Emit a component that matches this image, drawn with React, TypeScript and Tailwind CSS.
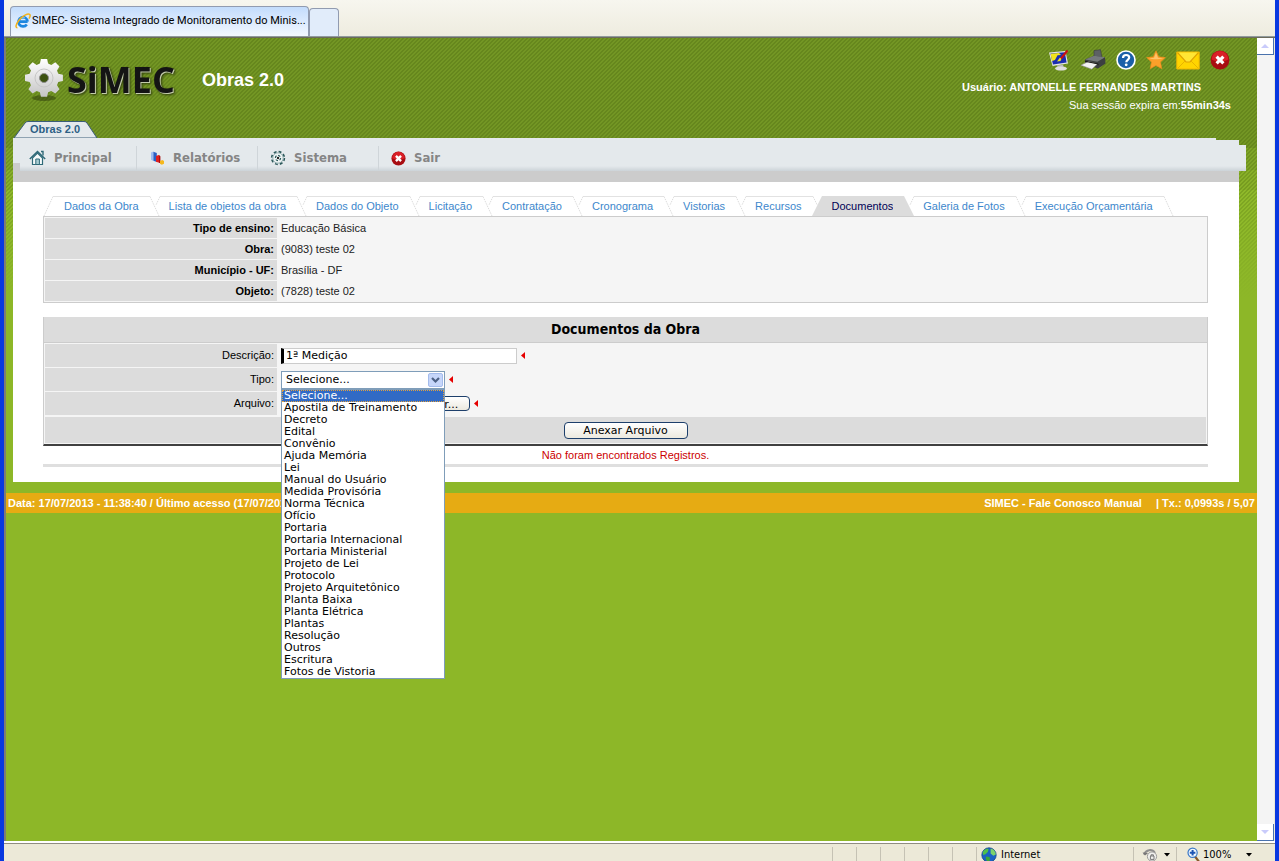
/**
 * SIMEC — Obras 2.0, "Documentos" screen inside its browser window.
 */
import type { ReactNode } from 'react';

const MENU = [
  { label: 'Principal', icon: <HomeIcon /> },
  { label: 'Relatórios', icon: <ChartIcon /> },
  { label: 'Sistema', icon: <GearIcon /> },
  { label: 'Sair', icon: <CloseIcon size={15} /> },
];

const TABS = [
  'Dados da Obra',
  'Lista de objetos da obra',
  'Dados do Objeto',
  'Licitação',
  'Contratação',
  'Cronograma',
  'Vistorias',
  'Recursos',
  'Documentos',
  'Galeria de Fotos',
  'Execução Orçamentária',
];

const ACTIVE_TAB = 'Documentos';

const INFO = [
  ['Tipo de ensino:', 'Educação Básica'],
  ['Obra:', '(9083) teste 02'],
  ['Município - UF:', 'Brasília - DF'],
  ['Objeto:', '(7828) teste 02'],
];

const TIPOS = [
  'Selecione...',
  'Apostila de Treinamento',
  'Decreto',
  'Edital',
  'Convênio',
  'Ajuda Memória',
  'Lei',
  'Manual do Usuário',
  'Medida Provisória',
  'Norma Técnica',
  'Ofício',
  'Portaria',
  'Portaria Internacional',
  'Portaria Ministerial',
  'Projeto de Lei',
  'Protocolo',
  'Projeto Arquitetônico',
  'Planta Baixa',
  'Planta Elétrica',
  'Plantas',
  'Resolução',
  'Outros',
  'Escritura',
  'Fotos de Vistoria',
];

// ─── Icons ───────────────────────────────────────────────────────────────────

function IeIcon() {
  return (
    <svg width="16" height="16" viewBox="0 0 16 16" fill="none" className="shrink-0">
      <path d="M12.6 8.6H4.2M12.6 8.6A4.6 4.6 0 1 0 11.8 11.4" stroke="#1c86e0" strokeWidth="2.6" />
      <path d="M4.6 6.4A3.8 3.8 0 0 1 10 5" stroke="#7cc8fa" strokeWidth="1" />
      <path d="M2.4 14.6C.2 15 .6 11.4 4 7.2 7.6 2.8 13 .2 14.6 1.4c1 .8.4 2.6-.6 4.2" stroke="#f2b21c" strokeWidth="1.5" />
    </svg>
  );
}

function HomeIcon() {
  return (
    <svg width="17" height="16" viewBox="0 0 17 16" fill="none" className="shrink-0">
      <path d="M12 1.5h2v4" stroke="#2f6a78" strokeWidth="1.4" />
      <path d="M3.5 8v6.5h10V8L8.5 3z" fill="#f7fbfb" stroke="#2f6a78" strokeWidth="1.2" />
      <path d="M.8 9 8.5 1.6 16.2 9" stroke="#2f6a78" strokeWidth="1.5" />
      <path d="M6.8 14.5V9h3.6v5.5z" fill="#a9cdd2" stroke="#2f6a78" />
    </svg>
  );
}

function ChartIcon() {
  return (
    <svg width="16" height="16" viewBox="0 0 16 16" className="shrink-0">
      <path d="M2 2.6 4.4 1.5v9.5L2 9.8z" fill="#9dbcf2" />
      <path d="M4.4 1.8 7.8 3v9L4.4 10.800z" fill="#2a5fc4" />
      <path d="M7 6l2.600-1 1.400.8v7.200L7 11.800z" fill="#e01f1f" />
      <path d="M10 5.400l1.400.8v7l-1.400-.4z" fill="#a90f0f" />
      <path d="M11 11l2.400-1 1.600.9v2.800l-2.200 1-1.800-.9z" fill="#f5b81e" />
    </svg>
  );
}

function GearIcon() {
  return (
    <svg width="16" height="16" viewBox="0 0 16 16" fill="none" className="shrink-0">
      <circle cx="8" cy="8" r="6.4" stroke="#2d5a5c" strokeWidth="1.6" strokeDasharray="2.9 2.1" />
      <circle cx="8" cy="8" r="5.2" fill="#eef4f4" stroke="#7fa0a2" strokeWidth=".8" />
      <circle cx="8" cy="8" r="2.6" stroke="#2d5a5c" strokeWidth="1.2" strokeDasharray="2.4 1.6" />
      <circle cx="8" cy="8" r="1.2" fill="#222" />
    </svg>
  );
}

function CloseIcon({ size }: { size: number }) {
  return (
    <svg width={size} height={size} viewBox="0 0 20 20" className="shrink-0">
      <circle cx="10" cy="10" r="9.4" fill="#a80d12" />
      <path d="M1.6 9.5a8.4 8.4 0 0 1 16.8 0C14 12 6 12 1.6 9.5z" fill="#d92027" />
      <path d="M6.6 6.6l6.8 6.8M13.4 6.6l-6.8 6.8" stroke="#fff" strokeWidth="3.2" />
    </svg>
  );
}

function MonitorIcon() {
  return (
    <svg width="22" height="22" viewBox="0 0 22 22">
      <path d="M1 3.5 17.5 2 20 14.5 4.5 17z" fill="#e6e6e6" />
      <path d="M2.4 4.6 16.8 3.2l1.8 10.4L5 15.4z" fill="#1a2db0" />
      <path d="M2.6 4.700 11 3.900 13 6l-3.500.3L7 11l-3 1z" fill="#f4e51b" />
      <path d="M9 12.500l3-4 1.500 1-1 2.500z" fill="#f4e51b" />
      <path d="M19.500 1.500 13 9.500" stroke="#c91212" strokeWidth="2.2" />
      <path d="M9 16.500l6-.8.8 2.300-6.300.4z" fill="#bdbdbd" />
      <ellipse cx="13" cy="19.500" rx="6" ry="2" fill="#dedede" />
    </svg>
  );
}

function PrinterIcon() {
  return (
    <svg width="26" height="22" viewBox="0 0 26 22">
      <path d="M14 1.5l6.5-.8 1.5 8-8 1z" fill="#5d6164" stroke="#3a3d3f" strokeWidth=".6" />
      <path d="M5 10.5 14 6.8l11 1.4.5 6.400-7.500 4.900L5 15z" fill="#3c3f41" />
      <path d="M5 10.5 14 6.8l11 1.400-7.600 4.500z" fill="#75797c" />
      <path d="M.8 16.200 8.400 12.500l9 2.400-5.600 5.300z" fill="#f2f2f2" stroke="#8b8b8b" strokeWidth=".6" />
      <path d="M5 12.300l13 2.600v1.300" stroke="#191919" strokeWidth="1" fill="none" />
    </svg>
  );
}

function HelpIcon() {
  return (
    <svg width="20" height="20" viewBox="0 0 20 20">
      <circle cx="10" cy="10" r="9" fill="#1b5fa8" stroke="#fff" strokeWidth="1.6" />
      <path d="M7 7.900C7 6 8.300 5 10.100 5c1.800 0 3.100 1 3.100 2.600 0 2.200-2.900 2.200-2.900 4.600" stroke="#fff" strokeWidth="2.2" fill="none" />
      <circle cx="10.200" cy="14.800" r="1.4" fill="#fff" />
    </svg>
  );
}

function StarIcon() {
  return (
    <svg width="20" height="20" viewBox="0 0 20 20">
      <path d="M10 .8l2.800 6 6.600.8-4.900 4.500 1.300 6.600L10 15.500l-5.800 3.200 1.300-6.600L.6 7.600l6.600-.8z" fill="#fba02a" stroke="#f08a1a" strokeWidth=".6" />
      <path d="M10 2.800l2 4.900 5 .5C13 9.600 7 9.800 3.400 8.300l4.600-.6z" fill="#ffc46a" />
    </svg>
  );
}

function MailIcon() {
  return (
    <svg width="24" height="19" viewBox="0 0 24 19">
      <path d="M.8 1h22.400v17H.8z" fill="#ffd500" stroke="#f0b400" />
      <path d="M1.500 1.500 10 11h4l8.500-9.500" fill="#ffe634" stroke="#e0a400" strokeWidth="1.2" />
      <path d="M1.500 17.500 9 10M22.500 17.500 15 10" stroke="#e8b400" />
    </svg>
  );
}

function GlobeIcon() {
  return (
    <svg width="16" height="16" viewBox="0 0 16 16" className="shrink-0">
      <circle cx="8" cy="8" r="7.2" fill="#1b62c4" stroke="#174a86" strokeWidth=".8" />
      <path d="M2 4.600C4 1.600 6.400 1.400 7.600 2.200L6.800 5 4.400 7.200 2 8z" fill="#4fc04a" />
      <path d="M9.600 1.400c3 .6 5 3 5.200 6l-2.400 1.400-2.800-2.200z" fill="#7bd36a" />
      <path d="M5 9.400l3.600.6.4 3.200-2 1.600C4.800 13.600 4.400 11.400 5 9.400z" fill="#3aa63a" />
    </svg>
  );
}

function PrivacyIcon() {
  return (
    <svg width="16" height="16" viewBox="0 0 16 16" fill="none" className="shrink-0">
      <path d="M2 7.500C4 2.500 10 1.500 13 6" stroke="#8f8f8f" strokeWidth="2" />
      <path d="M.5 5.500l2.500 3 3.200-2.400z" fill="#777" />
      <circle cx="10" cy="9.500" r="4.6" fill="#f1f1ee" stroke="#9a9a9a" />
      <path d="M8.400 9h3.600v3.400H8.400zM9 9V7.800h2.400V9" stroke="#777" />
    </svg>
  );
}

function ZoomIcon() {
  return (
    <svg width="14" height="16" viewBox="0 0 14 16" fill="none" className="shrink-0">
      <path d="M8 9.500l3.800 5" stroke="#8a5a2c" strokeWidth="2.2" />
      <circle cx="5.600" cy="5.800" r="4.6" fill="#f3f9ff" stroke="#3a78c8" strokeWidth="1.2" />
      <path d="M5.600 3v5.600M2.800 5.800h5.600" stroke="#1d55b4" strokeWidth="2" />
    </svg>
  );
}

function Caret() {
  return (
    <svg width="6" height="4" viewBox="0 0 6 4" className="shrink-0">
      <path d="M0 0h6L3 3.500z" fill="#000" />
    </svg>
  );
}

function Required() {
  return (
    <svg width="4" height="7" viewBox="0 0 4 7" className="shrink-0">
      <path d="M4 0v7L0 3.500z" fill="#e60000" />
    </svg>
  );
}

function Logo() {
  return (
    <svg width="153" height="56" viewBox="0 -5 153 56" className="shrink-0">
      <defs>
        <linearGradient id="steel" x1="0" y1="0" x2="0" y2="1">
          <stop offset="0" stopColor="#ffffff" />
          <stop offset="1" stopColor="#c4c4c4" />
        </linearGradient>
      </defs>
      <ellipse cx="19" cy="41" rx="12" ry="3" fill="#2b380c" opacity=".5" />
      <path
        fill="url(#steel)"
        d="M15.900 2h6.200l1 4.600 3.200 1.300 4-2.600 4.200 4.200-2.500 4 1.300 3.300 4.600 1v6.200l-4.600 1-1.300 3.200 2.500 4-4.200 4.300-4-2.600-3.200 1.300-1 4.600h-6.200l-1-4.600-3.300-1.300-4 2.600-4.200-4.300 2.600-4-1.400-3.200-4.600-1v-6.200l4.600-1 1.400-3.300-2.600-4L7.600 5.300l4 2.600 3.300-1.300z"
      />
      <circle cx="19" cy="21" r="9" fill="none" stroke="#c6c6c6" />
      <circle cx="19" cy="21" r="4.500" fill="#3c5210" stroke="#8f8f8f" />
      <text
        x="42"
        y="36"
        fill="#141414"
        fontFamily='"Open Sans", sans-serif'
        fontWeight="700"
        fontSize="36"
        className="[filter:drop-shadow(1px_1px_0_#c3ccab)_drop-shadow(1px_1px_1px_#2f3d0c)]"
      >
        SiMEC
      </text>
    </svg>
  );
}

// ─── Tab edges ───────────────────────────────────────────────────────────────

function TabStart() {
  return (
    <svg width="21" height="20" viewBox="0 0 21 20" fill="none" className="shrink-0">
      <path d="M1 20 10 .5" stroke="#dcdcdc" strokeDasharray="1.5 1" />
      <path d="M10 .5h11" stroke="#e2e2e2" />
    </svg>
  );
}

function TabEnd() {
  return (
    <svg width="21" height="20" viewBox="0 0 21 20" fill="none" className="shrink-0">
      <path d="M0 .5h11" stroke="#e2e2e2" />
      <path d="M11 .5 20 20" stroke="#dcdcdc" strokeDasharray="1.5 1" />
    </svg>
  );
}

function TabJoint({ left, right }: { left: boolean; right: boolean }) {
  return (
    <svg width="30" height="20" viewBox="0 0 30 20" fill="none" className="shrink-0">
      {!left && <path d="M0 .5h11" stroke="#e2e2e2" />}
      {!right && <path d="M21 .5h9" stroke="#e2e2e2" />}
      {!left && <path d={right ? 'M11 .5l4 8' : 'M11 .5 20 20'} stroke="#dcdcdc" strokeDasharray="1.5 1" />}
      {!right && <path d="M21 .5l-4 8.500" stroke="#dcdcdc" strokeDasharray="1.5 1" />}
      {left && <path d="M0 0h11l10 20H0z" fill="#dcdcdc" />}
      {right && <path d="M30 0H20L10 20h20z" fill="#dcdcdc" />}
    </svg>
  );
}

function TabBar() {
  return (
    <nav className="flex h-5 overflow-hidden">
      <TabStart />
      {TABS.map((tab, i) => {
        const active = tab === ACTIVE_TAB;
        return (
          <div key={tab} className="flex">
            <a
              href="#"
              aria-current={active ? 'page' : undefined}
              className={`whitespace-nowrap border-t text-[11px] leading-[19px] ${
                active ? 'border-[#dcdcdc] bg-[#dcdcdc] text-[#000055]' : 'border-[#e2e2e2] text-[#3d87cc]'
              }`}
            >
              {tab}
            </a>
            {i < TABS.length - 1 ? <TabJoint left={active} right={TABS[i + 1] === ACTIVE_TAB} /> : <TabEnd />}
          </div>
        );
      })}
    </nav>
  );
}

// ─── Page blocks ─────────────────────────────────────────────────────────────

function Header() {
  return (
    <header className="flex justify-between">
      <div className="flex flex-col pl-[7px]">
        <div className="flex h-[83px] items-center gap-6 pl-3">
          <Logo />
          <h1 className="text-lg font-bold text-white">Obras 2.0</h1>
        </div>
        <div className="flex h-[17px] w-[86px] items-center">
          <svg width="86" height="17" viewBox="0 0 86 17" className="absolute">
            <path d="M1 17 12 2q1-1.500 3-1.500h56q2 0 3 1.500l10 15z" fill="#e4e9ec" stroke="#3b5d78" />
          </svg>
          <a href="#" className="relative pl-[17px] text-[11px] font-bold text-[#2c5f85]">Obras 2.0</a>
        </div>
      </div>
      <div className="flex flex-col items-end pr-[26px] text-[11px] leading-[18px] text-white">
        <div className="flex h-[40px] items-center gap-[10px] pr-px pt-1">
          <button type="button" aria-label="Ambiente"><MonitorIcon /></button>
          <button type="button" aria-label="Imprimir"><PrinterIcon /></button>
          <button type="button" aria-label="Ajuda"><HelpIcon /></button>
          <button type="button" aria-label="Favoritos"><StarIcon /></button>
          <button type="button" aria-label="Mensagens"><MailIcon /></button>
          <button type="button" aria-label="Sair"><CloseIcon size={20} /></button>
        </div>
        <p className="pr-[30px] font-bold">Usuário: ANTONELLE FERNANDES MARTINS</p>
        <p>
          Sua sessão expira em:<b>55min34s</b>
        </p>
      </div>
    </header>
  );
}

function MainMenu() {
  return (
    <div className="ml-[7px] mr-[11px] bg-[linear-gradient(#ccc,#ccc)] bg-[position:0_24px] bg-no-repeat pb-[11px] [background-size:calc(100%-7px)_100%]">
      <nav className="flex h-[33px] pl-1.5 bg-[linear-gradient(#e4e9ec_28px,#ccd3d8_33px)] [clip-path:polygon(0_0,calc(100%-30px)_0,calc(100%-30px)_2px,calc(100%-7px)_2px,calc(100%-7px)_7px,100%_7px,100%_100%,7px_100%,7px_25px,0_25px)]">
        {MENU.map((item, i) => (
          <a
            key={item.label}
            href="#"
            className={`mt-2 flex h-6 w-[121px] items-center gap-2 font-['DejaVu_Sans_Condensed','DejaVu_Sans',sans-serif] text-[13px] font-bold text-[#858585] ${
              i === 0 ? '-mr-1 pl-2.5' : 'border-l border-[#cfd5d9] pl-3'
            }`}
          >
            {item.icon}
            {item.label}
          </a>
        ))}
      </nav>
    </div>
  );
}

function InfoTable() {
  return (
    <table className="w-full table-fixed border-separate border-spacing-px border border-[#ccc] bg-[#f5f5f5] text-[11px] leading-5">
      <tbody>
        {INFO.map(([label, value]) => (
          <tr key={label}>
            <th scope="row" className="w-[232px] bg-[#dcdcdc] p-0 pr-[3px] text-right font-bold text-black">
              {label}
            </th>
            <td className="p-0 pl-[3px] text-[#222]">{value}</td>
          </tr>
        ))}
      </tbody>
    </table>
  );
}

function Row({ label, htmlFor, children }: { label: string; htmlFor: string; children: ReactNode }) {
  return (
    <div className="flex h-6 border-b border-[#f5f5f5] last:border-0">
      <label htmlFor={htmlFor} className="w-[232px] shrink-0 bg-[#dcdcdc] pr-[3px] text-right leading-[23px]">
        {label}
      </label>
      <div className="relative flex grow items-center gap-1 pl-1">{children}</div>
    </div>
  );
}

function TipoList() {
  return (
    <ul
      role="listbox"
      aria-label="Tipo"
      className="absolute left-1 top-[21px] z-10 w-[164px] border border-[#7f9db9] bg-white text-[11px] leading-3 text-black"
    >
      {TIPOS.map((tipo, i) => (
        <li
          key={tipo}
          role="option"
          aria-selected={i === 0}
          className={
            i === 0
              ? 'whitespace-nowrap bg-[#316ac5] pl-0.5 text-white outline-1 -outline-offset-1 outline-dotted outline-[#e0a040]'
              : 'whitespace-nowrap pl-0.5'
          }
        >
          {tipo}
        </li>
      ))}
    </ul>
  );
}

function DocumentForm() {
  return (
    <form className="mt-3.5 border-x border-b-2 border-x-[#ccc] border-b-[#404040] bg-[#f5f5f5] text-[11px]">
      <h2 className="border-b border-[#ccc] bg-[#dcdcdc] text-center font-['DejaVu_Sans_Condensed','DejaVu_Sans',sans-serif] text-sm font-bold leading-[25px] text-black">
        Documentos da Obra
      </h2>
      <div className="p-px">
        <Row label="Descrição:" htmlFor="descricao">
          <input
            id="descricao"
            type="text"
            defaultValue="1ª Medição"
            className="h-4 w-[236px] border border-l-[3px] border-[#ccc] border-l-black bg-white px-0.5 pt-px font-['DejaVu_Sans',sans-serif] text-[11px] outline-none"
          />
          <Required />
        </Row>
        <Row label="Tipo:" htmlFor="tipo">
          <div className="relative h-[18px] w-[164px] font-['DejaVu_Sans',sans-serif]">
            <select
              id="tipo"
              className="block h-[18px] w-full appearance-none border border-[#7f9db9] bg-white pl-1 text-[11px] text-black outline-none"
            >
              {TIPOS.map((tipo) => (
                <option key={tipo}>{tipo}</option>
              ))}
            </select>
            <svg width="15" height="14" viewBox="0 0 15 14" className="pointer-events-none absolute right-0.5 top-0.5">
              <rect x=".5" y=".5" width="14" height="13" rx="1.5" fill="#c6d6fa" stroke="#a4bcec" />
              <path d="M4 5l3.500 3.500L11 5" fill="none" stroke="#4d6185" strokeWidth="2.2" />
            </svg>
          </div>
          <Required />
          <div className="font-['DejaVu_Sans',sans-serif]">
            <TipoList />
          </div>
        </Row>
        <Row label="Arquivo:" htmlFor="arquivo">
          <input id="arquivo" type="text" readOnly className="h-4 w-[106px] border border-[#7f9db9] bg-white" />
          <button
            type="button"
            className="h-[15px] w-[79px] overflow-hidden rounded-sm border border-[#1d3f6b] bg-gradient-to-b from-white to-[#ece9df] font-['DejaVu_Sans',sans-serif] text-[11px] leading-[15px] text-black"
          >
            Procurar...
          </button>
          <Required />
        </Row>
        <div className="mt-px flex h-[26px] items-center justify-center bg-[#dcdcdc]">
          <button
            type="submit"
            className="h-[17px] w-[124px] rounded-sm border border-[#1d3f6b] bg-gradient-to-b from-white to-[#ece9df] font-['DejaVu_Sans',sans-serif] text-[11px] leading-[13px] text-black"
          >
            Anexar Arquivo
          </button>
        </div>
      </div>
    </form>
  );
}

function Footer() {
  return (
    <footer className="mt-[11px] flex justify-between bg-[#e6ab13] px-0.5 text-[11px] font-bold leading-5 text-white">
      <span className="whitespace-nowrap">Data: 17/07/2013 - 11:38:40 / Último acesso (17/07/201</span>
      <span className="flex gap-3.5 whitespace-nowrap">
        <a href="#">SIMEC - Fale Conosco Manual</a>
        <span>| Tx.: 0,0993s / 5,07</span>
      </span>
    </footer>
  );
}

// ─── Browser frame ───────────────────────────────────────────────────────────

function BrowserTabs() {
  return (
    <div className="flex h-[37px] items-end border-b border-[#919b9c] bg-gradient-to-b from-[#f7f6ef] to-[#eeecdf] pl-1.5">
      <button
        type="button"
        className="flex h-[30px] w-[299px] items-center gap-px overflow-hidden whitespace-nowrap rounded-t border border-b-0 border-[#919bb0] bg-gradient-to-b from-[#c3dcfc] to-[#f3f8ff] pb-px pl-1 font-[Roboto,sans-serif] text-[11px] text-black"
      >
        <IeIcon />
        SIMEC- Sistema Integrado de Monitoramento do Minis...
      </button>
      <button
        type="button"
        aria-label="Nova guia"
        className="h-7 w-[30px] rounded-t border border-b-0 border-[#919bb0] bg-[#e1ecfa]"
      />
    </div>
  );
}

function ScrollBar() {
  return (
    <div className="flex w-[18px] shrink-0 flex-col justify-between border-r border-[#ece9d8] bg-[#f4f4f4]">
      <button
        type="button"
        aria-label="Rolar para cima"
        className="flex h-[17px] w-[17px] items-center justify-center border-b border-r border-[#4a72ad] bg-white"
      >
        <svg width="8" height="4" viewBox="0 0 8 4">
          <path d="M0 4 4 0l4 4z" fill="#c9cbfb" />
        </svg>
      </button>
      <button
        type="button"
        aria-label="Rolar para baixo"
        className="flex h-[17px] w-[17px] items-center justify-center border-b border-r border-[#4a72ad] bg-white"
      >
        <svg width="8" height="4" viewBox="0 0 8 4">
          <path d="M0 0l4 4 4-4z" fill="#c9cbfb" />
        </svg>
      </button>
    </div>
  );
}

function StatusBar() {
  return (
    <div className="flex h-[20px] items-start justify-end border-t-2 border-white bg-[#ece9d8] font-['DejaVu_Sans_Condensed','DejaVu_Sans',sans-serif] text-[11px] leading-4 text-black shadow-[inset_0_1px_0_#8f8d80]">
      {[0, 1, 2, 3, 4, 5].map((n) => (
        <span key={n} className="mt-1 h-4 w-6 shrink-0 border-l border-[#c5c2b4]" />
      ))}
      <span className="mt-1 flex h-4 w-[157px] items-center gap-1 border-l border-[#c5c2b4] pl-1">
        <GlobeIcon />
        Internet
      </span>
      <span className="mt-1 flex h-4 w-[43px] items-center gap-1.5 border-l border-[#c5c2b4] pl-2">
        <PrivacyIcon />
        <Caret />
      </span>
      <span className="mt-1 flex h-4 w-[99px] items-center border-l border-[#c5c2b4] pl-2.5">
        <ZoomIcon />
        <span className="w-[45px] pl-0.5">100%</span>
        <Caret />
      </span>
    </div>
  );
}

export default function App() {
  return (
    <div className="flex h-screen flex-col overflow-hidden border-x-4 border-l-[#0838e0] border-r-[#0838e0] bg-[#ece9d8] font-['Liberation_Sans',Arial,sans-serif]">
      <BrowserTabs />
      <div className="flex grow border-l-2 border-t border-l-[#7e7c74] border-t-[#6b6a5c]">
        <div className="grow bg-[linear-gradient(transparent_150px,#8db728_260px),linear-gradient(135deg,rgba(50,75,0,0.2)_25%,transparent_25%_50%,rgba(50,75,0,0.2)_50%_75%,transparent_75%),linear-gradient(#739624_110px,#7fa527_110px_132px,#88b028_132px_152px,#8fb92a_152px)] [background-size:100%_100%,4px_4px,100%_100%]">
          <Header />
          <MainMenu />
          <main className="ml-[7px] mr-[18px] bg-white pb-[15px] pl-[30px] pr-[31px] pt-3.5">
            <TabBar />
            <InfoTable />
            <DocumentForm />
            <p className="border-b-[3px] border-[#dfdfdf] text-center text-[11px] leading-[18px] text-[#cc0000]">
              Não foram encontrados Registros.
            </p>
          </main>
          <Footer />
        </div>
        <ScrollBar />
      </div>
      <StatusBar />
    </div>
  );
}
